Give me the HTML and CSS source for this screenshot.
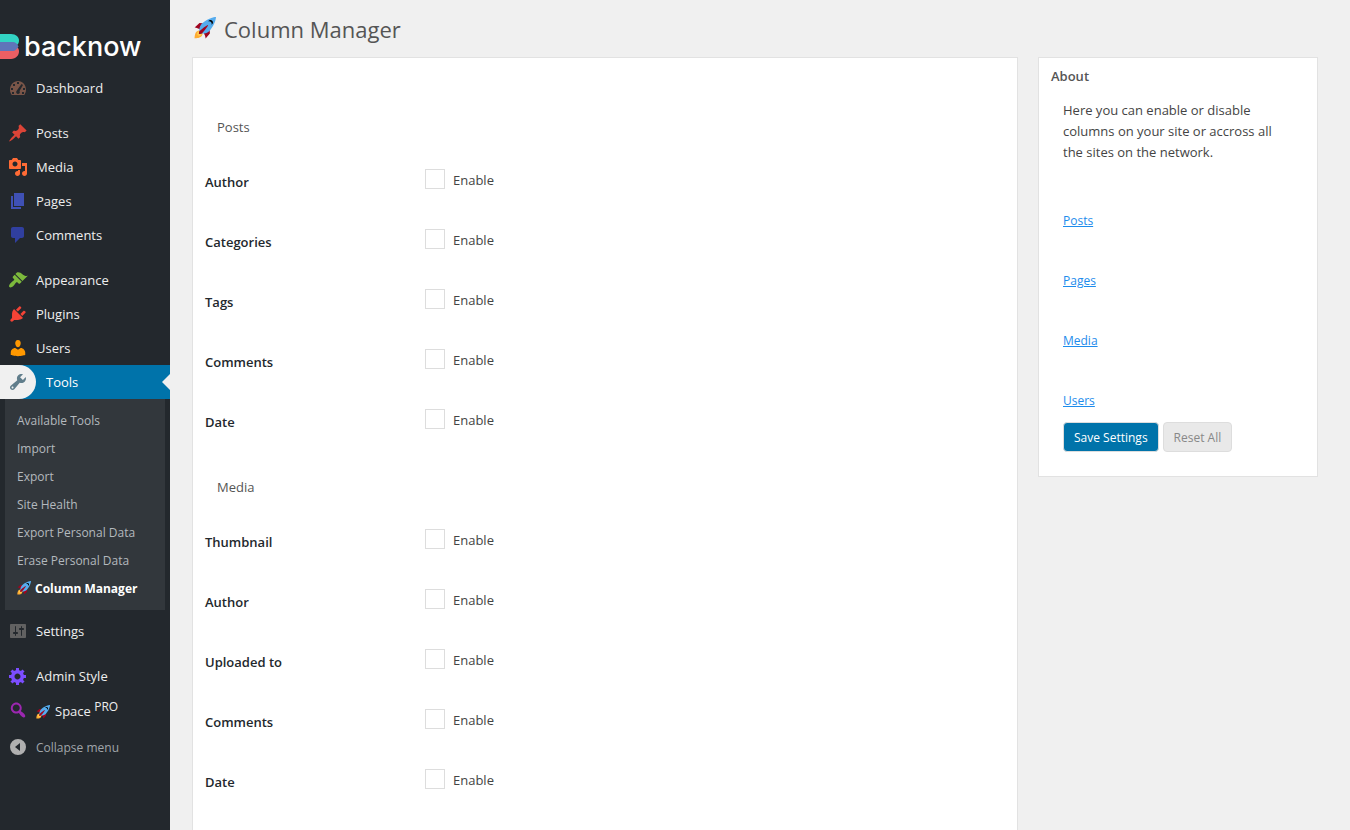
FILE: index.html
```html
<!DOCTYPE html>
<html lang="en">
<head>
<meta charset="utf-8">
<title>Column Manager</title>
<link rel="stylesheet" href="styles.css">
</head>
<body>
<svg class="defs" aria-hidden="true">
  <symbol id="rocket" viewBox="0 0 36 36">
    <path fill="#A0041E" d="M1 17l8-7 16 1 1 16-7 8s0-6-6-12-12-6-12-6z"/>
    <path fill="#FFAC33" d="M.97 35s-.04-7.98 2.99-11S15 21.19 15 21.19 15 29 12 32 .97 35 .97 35z"/>
    <circle fill="#FFCC4D" cx="9" cy="27" r="4"/>
    <path fill="#55ACEE" d="M36 0S26 0 14 10c-6 5-6 14-4 16s11 2 16-4C36 10 36 0 36 0z"/>
    <path d="M27 5c-1.62 0-3.01.97-3.64 2.36.5-.23 1.05-.36 1.64-.36 2.2 0 4 1.8 4 4 0 .59-.13 1.14-.36 1.64C30.03 12.01 31 10.62 31 9c0-2.2-1.8-4-4-4z"/>
    <path fill="#A0041E" d="M8 28s0-4 1-5 13-11 14-10-9 13-10 14-5 1-5 1z"/>
  </symbol>
</svg>
<div class="shell">
  <nav class="sidebar" aria-label="Main menu">
    <a class="brand" href="#">
      <svg class="brand-mark" viewBox="0 0 19 26" aria-hidden="true">
        <path fill="#32d3c3" d="M0 1h11c5 0 8 3 8 6.500S17 13 13 13H0z"/>
        <path fill="#eb5f63" d="M0 13h13c4 0 6 2 6 5.500S16 26 11 26H0z"/>
        <path fill="#5f74b9" d="M0 9h13c2 0 4 1 5.500 4.500C17 16 15 18 13 18H0z"/>
      </svg>
      <span class="brand-name">backnow</span>
    </a>
    <ul class="menu">
      <li><a class="item" href="#"><svg class="icon brown" viewBox="0 0 20 20"><path fill-rule="evenodd" d="M3.760 17h12.480C17.350 15.520 18 13.710 18 11.730 18 6.960 14.420 3 10 3s-8 3.960-8 8.730c0 1.980.650 3.790 1.760 5.270zM9 4h2v2H9zM5 6h2v2H5zm8.500 0L15 7l-3.500 6c1 2-.2 3-1.500 3s-2.500-1.500-1.500-3zM3 10h2v2H3zm12 0h2v2h-2zM4 14h2v2H4zm10 0h2v2h-2z"/></svg>Dashboard</a></li>
      <li class="group"><a class="item" href="#"><svg class="icon red" viewBox="0 0 20 20"><path d="M10.440 3.020l1.820-1.820 6.360 6.350-1.830 1.820c-1.050-.68-2.480-.57-3.410.36l-.75.75c-.92.93-1.040 2.350-.35 3.410l-1.830 1.820-2.410-2.410-2.800 2.790c-.42.42-3.380 2.710-3.800 2.290s1.860-3.390 2.280-3.810l2.790-2.790L4.100 9.360l1.830-1.820c1.050.69 2.480.57 3.400-.36l.75-.75c.93-.92 1.050-2.350.36-3.410z"/></svg>Posts</a></li>
      <li><a class="item" href="#"><svg class="icon orange" viewBox="0 0 20 20"><path d="M13 11V4c0-.55-.45-1-1-1h-1.670L9 1H5L3.670 3H2c-.55 0-1 .45-1 1v7c0 .55.45 1 1 1h10c.55 0 1-.45 1-1zM7 4.500c1.380 0 2.500 1.120 2.500 2.500S8.380 9.500 7 9.500 4.500 8.380 4.500 7 5.620 4.500 7 4.500zM14 6h5v10.500c0 1.380-1.120 2.500-2.500 2.500S14 17.880 14 16.500s1.120-2.500 2.500-2.500c.17 0 .34.02.5.05V9h-3V6zm-4 8.050V13h2v3.500c0 1.380-1.120 2.500-2.500 2.500S7 17.880 7 16.500 8.120 14 9.500 14c.17 0 .34.02.5.05z"/></svg>Media</a></li>
      <li><a class="item" href="#"><svg class="icon indigo" viewBox="0 0 20 20"><path d="M6 15V2h10v13H6zm-1 1h8v2H3V5h2v11z"/></svg>Pages</a></li>
      <li><a class="item" href="#"><svg class="icon navy" viewBox="0 0 20 20"><path d="M5 2h9c1.100 0 2 .9 2 2v7c0 1.100-.9 2-2 2h-2l-5 5v-5H5c-1.100 0-2-.9-2-2V4c0-1.100.9-2 2-2z"/></svg>Comments</a></li>
      <li class="group"><a class="item" href="#"><svg class="icon green" viewBox="0 0 20 20"><path d="M14.480 11.060L7.410 3.990l1.500-1.500c.5-.56 2.300-.47 3.510.32 1.210.8 1.430 1.280 2.910 2.100 1.180.64 2.450 1.260 4.450.85zm-.71.71L6.700 4.700 4.930 6.470c-.39.39-.39 1.020 0 1.410l1.060 1.060c.39.39.39 1.030 0 1.420-.6.6-1.430 1.110-2.210 1.690-.35.26-.7.53-1.010.84C1.430 14.230.4 16.080 1.400 17.070c.99 1 2.840-.03 4.180-1.360.31-.31.58-.66.85-1.020.57-.78 1.080-1.610 1.690-2.210.39-.39 1.020-.39 1.410 0l1.060 1.060c.39.39 1.020.39 1.410 0z"/></svg>Appearance</a></li>
      <li><a class="item" href="#"><svg class="icon scarlet" viewBox="0 0 20 20"><path d="M13.110 4.360L9.870 7.600 8 5.730l3.240-3.240c.35-.34 1.050-.2 1.560.32.52.51.66 1.210.31 1.550zm-8 1.770l.91-1.120 9.010 9.010-1.190.84c-.71.71-2.630 1.160-3.820 1.160H6.140L4.900 17.260c-.59.59-1.540.59-2.120 0-.59-.58-.59-1.530 0-2.120l1.240-1.240v-3.880c0-1.130.4-3.190 1.090-3.890zm7.260 3.970l3.240-3.240c.34-.35 1.040-.21 1.550.31.52.51.66 1.210.31 1.550l-3.240 3.250z"/></svg>Plugins</a></li>
      <li><a class="item" href="#"><svg class="icon amber" viewBox="0 0 20 20"><path d="M10 9.250c-2.270 0-2.730-3.440-2.730-3.440C7 4.020 7.820 2 9.970 2c2.160 0 2.980 2.020 2.710 3.810 0 0-.41 3.440-2.680 3.440zm0 2.570L12.720 10c2.390 0 4.520 2.330 4.520 4.530v2.490s-3.650 1.130-7.240 1.130c-3.650 0-7.240-1.130-7.240-1.130v-2.490c0-2.250 1.940-4.480 4.470-4.480z"/></svg>Users</a></li>
      <li>
        <a class="item current" href="#"><span class="bubble"><svg class="icon slate" viewBox="0 0 20 20"><path d="M16.680 9.770c-1.340 1.340-3.300 1.670-4.950.99l-5.410 6.520c-.99.99-2.590.99-3.580 0s-.99-2.590 0-3.570l6.520-5.420c-.68-1.650-.35-3.610.99-4.950 1.280-1.280 3.120-1.620 4.720-1.060l-2.890 2.890 2.820 2.820 2.860-2.870c.53 1.580.18 3.390-1.080 4.650zM3.810 16.210c.4.39 1.040.39 1.430 0 .4-.4.4-1.040 0-1.430-.39-.4-1.030-.4-1.430 0-.39.39-.39 1.030 0 1.430z"/></svg></span>Tools</a>
        <ul class="submenu">
          <li><a href="#">Available Tools</a></li>
          <li><a href="#">Import</a></li>
          <li><a href="#">Export</a></li>
          <li><a href="#">Site Health</a></li>
          <li><a href="#">Export Personal Data</a></li>
          <li><a href="#">Erase Personal Data</a></li>
          <li><a class="here" href="#" aria-current="page"><svg class="rocket-small" aria-hidden="true"><use href="#rocket"/></svg>Column Manager</a></li>
        </ul>
      </li>
      <li><a class="item" href="#"><svg class="icon gray" viewBox="0 0 20 20"><path d="M18 16V4c0-.55-.45-1-1-1H3c-.55 0-1 .45-1 1v12c0 .55.45 1 1 1h14c.55 0 1-.45 1-1zM8 11h1c.55 0 1 .45 1 1s-.45 1-1 1H8v1.500c0 .28-.22.5-.5.5s-.5-.22-.5-.5V13H6c-.55 0-1-.45-1-1s.45-1 1-1h1V5.500c0-.28.22-.5.5-.5s.5.22.5.5V11zm5-2h-1c-.55 0-1-.45-1-1s.45-1 1-1h1V5.500c0-.28.22-.5.5-.5s.5.22.5.5V7h1c.55 0 1 .45 1 1s-.45 1-1 1h-1v5.500c0 .28-.22.5-.5.5s-.5-.22-.5-.5V9z"/></svg>Settings</a></li>
      <li class="group"><a class="item" href="#"><svg class="icon violet" viewBox="0 0 20 20"><path d="M18 12h-2.180c-.17.7-.44 1.350-.81 1.930l1.540 1.540-2.100 2.100-1.540-1.540c-.58.36-1.230.63-1.910.79V19H8v-2.180c-.68-.16-1.330-.43-1.910-.79l-1.540 1.540-2.120-2.120 1.540-1.540c-.36-.58-.63-1.230-.79-1.910H1V9.030h2.170c.16-.7.44-1.350.8-1.940L2.430 5.550l2.100-2.100 1.540 1.540c.58-.37 1.240-.64 1.930-.81V2h3v2.180c.68.16 1.330.43 1.910.79l1.540-1.540 2.120 2.120-1.540 1.540c.36.59.64 1.240.8 1.940H18V12zm-8.500 1.500c1.660 0 3-1.340 3-3s-1.340-3-3-3-3 1.340-3 3 1.340 3 3 3z"/></svg>Admin Style</a></li>
      <li><a class="item promo" href="#"><svg class="icon purple" viewBox="0 0 20 20"><path d="M12.140 4.180c1.870 1.870 2.110 4.750.72 6.890.12.1.22.21.36.31.2.16.47.36.81.59.34.24.56.39.66.47.42.31.73.57.94.78.32.32.6.65.84 1 .25.35.44.69.59 1.040.14.35.21.68.18 1-.02.32-.14.59-.36.81s-.49.34-.81.36c-.31.02-.65-.04-.99-.19-.35-.14-.7-.34-1.040-.59-.35-.24-.68-.52-1-.84-.21-.21-.47-.52-.77-.93-.1-.13-.25-.35-.47-.66-.22-.32-.4-.57-.56-.78-.16-.2-.29-.35-.44-.5-2.070 1.090-4.690.76-6.440-.98-2.140-2.150-2.140-5.640 0-7.780 2.150-2.150 5.630-2.150 7.780 0zm-1.410 6.360c1.360-1.370 1.360-3.580 0-4.950-1.370-1.370-3.590-1.370-4.950 0-1.370 1.370-1.370 3.580 0 4.950 1.360 1.370 3.580 1.370 4.950 0z"/></svg><span class="space"><svg class="rocket-small" aria-hidden="true"><use href="#rocket"/></svg><span>Space <sup>PRO</sup></span></span></a></li>
      <li><button class="item collapse" type="button"><svg class="icon silver" viewBox="0 0 20 20"><path fill-rule="evenodd" d="M10 2a8 8 0 1 0 0 16 8 8 0 0 0 0-16zm2 4v8l-5-4z"/></svg>Collapse menu</button></li>
    </ul>
  </nav>
  <main class="content">
    <h1><svg class="rocket-large" aria-hidden="true"><use href="#rocket"/></svg>Column Manager</h1>
    <form class="columns">
      <div class="panel options">
        <h2>Posts</h2>
        <table>
          <tr><th scope="row">Author</th><td><label><input type="checkbox">Enable</label></td></tr>
          <tr><th scope="row">Categories</th><td><label><input type="checkbox">Enable</label></td></tr>
          <tr><th scope="row">Tags</th><td><label><input type="checkbox">Enable</label></td></tr>
          <tr><th scope="row">Comments</th><td><label><input type="checkbox">Enable</label></td></tr>
          <tr><th scope="row">Date</th><td><label><input type="checkbox">Enable</label></td></tr>
        </table>
        <h2>Media</h2>
        <table>
          <tr><th scope="row">Thumbnail</th><td><label><input type="checkbox">Enable</label></td></tr>
          <tr><th scope="row">Author</th><td><label><input type="checkbox">Enable</label></td></tr>
          <tr><th scope="row">Uploaded to</th><td><label><input type="checkbox">Enable</label></td></tr>
          <tr><th scope="row">Comments</th><td><label><input type="checkbox">Enable</label></td></tr>
          <tr><th scope="row">Date</th><td><label><input type="checkbox">Enable</label></td></tr>
        </table>
      </div>
      <aside class="panel about">
        <h3>About</h3>
        <div class="about-body">
          <p>Here you can enable or disable columns on your site or accross all the sites on the network.</p>
          <ul class="jump">
            <li><a href="#">Posts</a></li>
            <li><a href="#">Pages</a></li>
            <li><a href="#">Media</a></li>
            <li><a href="#">Users</a></li>
          </ul>
          <div class="actions">
            <button class="save" type="submit">Save Settings</button>
            <button class="reset" type="reset">Reset All</button>
          </div>
        </div>
      </aside>
    </form>
  </main>
</div>
</body>
</html>
```

FILE: styles.css
```css
* { box-sizing: border-box; }
body {
  margin: 0;
  background: #f0f0f0;
  color: #444;
  font: 13px/21px "Open Sans", "Noto Sans", sans-serif;
}
h1, h2, h3, p, ul { margin: 0; padding: 0; }
ul { list-style: none; }
a { color: #1e8cec; }
button { font: inherit; cursor: pointer; }
.defs { position: absolute; width: 0; height: 0; }

.shell { display: flex; min-height: 100vh; }

.sidebar {
  flex: 0 0 170px;
  padding-top: 33px;
  background: #23282d;
}
.brand {
  display: flex;
  align-items: center;
  gap: 5px;
  height: 38px;
  padding-bottom: 12px;
  color: #fff;
  text-decoration: none;
}
.brand-mark { width: 19px; height: 26px; }
.brand-name { font: 500 27px/26px Inter, sans-serif; padding-top: 2px; }

.group { margin-top: 11px; }
.item {
  display: flex;
  align-items: center;
  gap: 8px;
  width: 100%;
  min-height: 34px;
  padding: 0 0 0 8px;
  border: 0;
  background: none;
  color: #eee;
  text-decoration: none;
}
.icon { width: 20px; height: 20px; flex: none; fill: currentColor; }
.brown { color: #795548; }
.red { color: #db4437; }
.orange { color: #ff6b35; }
.indigo { color: #3f51b5; }
.navy { color: #303f9f; }
.green { color: #7cb93c; }
.scarlet { color: #f44336; }
.amber { color: #ff9800; }
.slate { color: #607d8b; }
.gray { color: #616161; }
.violet { color: #7c4dff; }
.purple { color: #9c27b0; }
.silver { color: #b0b0b0; }

.current {
  position: relative;
  gap: 10px;
  padding-left: 0;
  background: #0073aa;
  color: #fff;
}
.current::after {
  content: "";
  position: absolute;
  right: 0;
  border: solid transparent;
  border-width: 8px 8px 8px 0;
  border-right-color: #f0f0f0;
}
.bubble {
  display: flex;
  align-items: center;
  width: 36px;
  height: 34px;
  padding-left: 8px;
  border-radius: 0 17px 17px 0;
  background: #f0f0f0;
}
.submenu {
  margin: 0 5px 4px;
  padding: 7px 0 8px;
  background: #32373c;
}
.submenu a {
  display: flex;
  align-items: center;
  gap: 4px;
  height: 28px;
  padding-left: 12px;
  color: #b4b9be;
  font-size: 12px;
  text-decoration: none;
}
.submenu .here { color: #fff; font-weight: 700; }
.rocket-small { width: 14px; height: 14px; }
.promo { align-items: flex-start; height: 37px; padding-top: 7px; }
.space {
  display: flex;
  align-items: center;
  gap: 5px;
  padding-top: 1px;
}
.space sup { font-size: 12px; line-height: 0; }
.collapse { color: #a0a5aa; font-size: 12px; }

.content { flex: 1; min-width: 0; padding: 13px 32px 0 22px; }
h1 {
  display: flex;
  align-items: center;
  gap: 8px;
  height: 32px;
  color: #555;
  font-size: 22px;
  font-weight: 400;
}
.rocket-large { width: 24px; height: 24px; padding: 0 0 2px 2px; }
.columns {
  display: flex;
  align-items: flex-start;
  gap: 20px;
  margin-top: 12px;
}
.panel { border: 1px solid #e2e2e2; background: #fff; }
.options { flex: 1; padding: 39px 12px; }
.options h2 {
  height: 60px;
  padding: 20px 12px;
  color: #555;
  font-size: 13px;
  font-weight: 400;
}
table { width: 100%; border-collapse: collapse; }
tr { height: 60px; }
th, td { vertical-align: top; text-align: left; }
th { width: 220px; padding: 15px 0 0; color: #23282d; font-weight: 600; }
td { padding: 12px 0 0; }
label { display: flex; align-items: flex-start; gap: 8px; width: max-content; line-height: 22px; }
input {
  appearance: none;
  width: 20px;
  height: 20px;
  margin: 0;
  border: 1px solid #ddd;
  background: #fff;
}
input:checked { background: #0073aa; }

.about { flex: 0 0 280px; padding: 8px 12px 24px; }
.about h3 { color: #555; font-size: 13px; font-weight: 600; }
.about-body { padding: 13px 12px 0; }
.jump { display: grid; gap: 39px; padding-top: 47px; font-size: 12px; }
.actions { display: flex; gap: 4px; padding-top: 11px; }
.actions button {
  height: 30px;
  padding: 1px 10px 0;
  border: 1px solid #ddd;
  border-radius: 4px;
  font-size: 12px;
}
.actions .save { background: #0073aa; color: #fff; }
.actions .reset { background: #e9e9e9; color: #888; }
```
